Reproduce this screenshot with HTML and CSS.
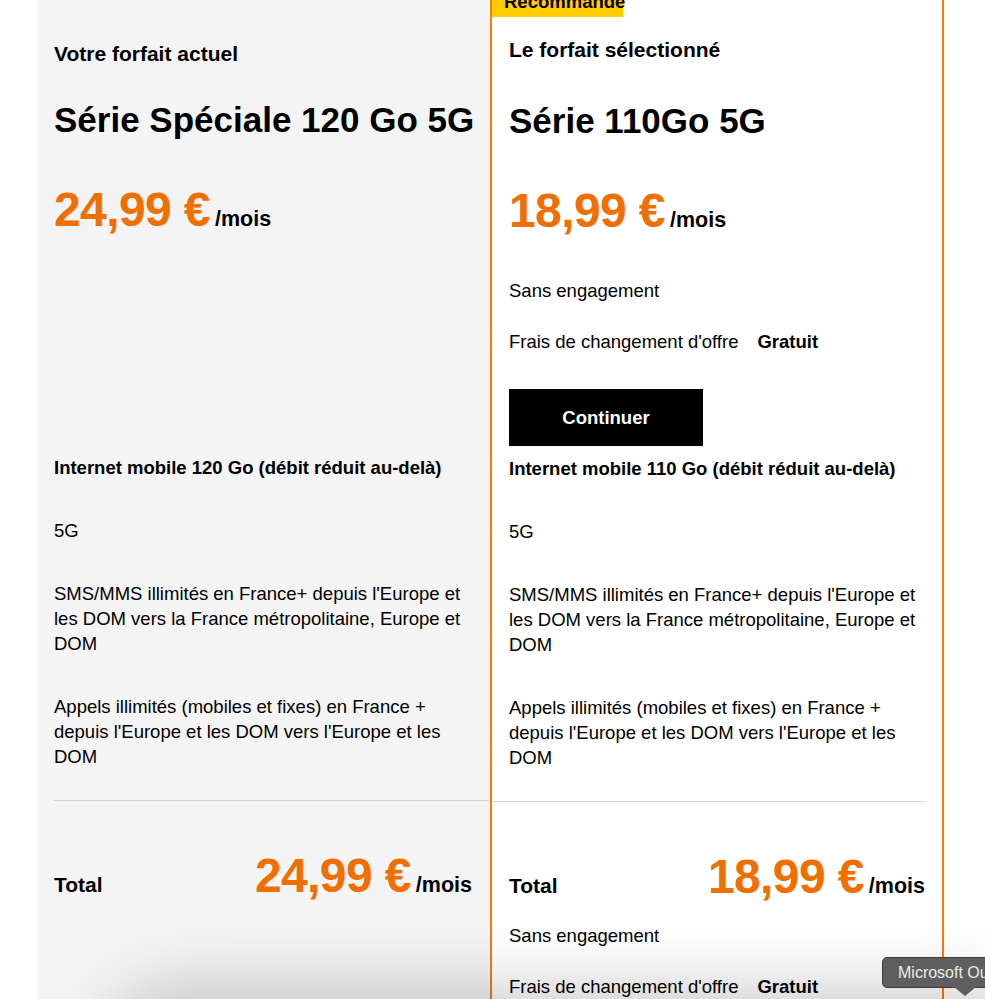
FILE: index.html
```html
<!DOCTYPE html>
<html lang="fr">
<head>
<meta charset="utf-8">
<title>Comparaison des forfaits</title>
<link rel="stylesheet" href="styles.css">
</head>
<body>
<div class="page">
  <section class="plan plan--current">
    <div class="plan-head">
      <p class="plan-label">Votre forfait actuel</p>
      <h2 class="plan-name">Série Spéciale 120 Go 5G</h2>
      <div class="price"><span class="price-amount">24,99 €</span><span class="price-unit">/mois</span></div>
    </div>
    <div class="plan-offer"></div>
    <ul class="features">
      <li class="feature feature--strong">Internet mobile 120 Go (débit réduit au-delà)</li>
      <li class="feature">5G</li>
      <li class="feature">SMS/MMS illimités en France+ depuis l'Europe et les DOM vers la France métropolitaine, Europe et DOM</li>
      <li class="feature">Appels illimités (mobiles et fixes) en France + depuis l'Europe et les DOM vers l'Europe et les DOM</li>
    </ul>
    <div class="total">
      <span class="total-label">Total</span>
      <div class="price"><span class="price-amount">24,99 €</span><span class="price-unit">/mois</span></div>
    </div>
  </section>

  <section class="plan plan--selected">
    <span class="badge">Recommandé</span>
    <div class="plan-head">
      <p class="plan-label">Le forfait sélectionné</p>
      <h2 class="plan-name">Série 110Go 5G</h2>
      <div class="price"><span class="price-amount">18,99 €</span><span class="price-unit">/mois</span></div>
    </div>
    <div class="plan-offer">
      <p class="offer-line">Sans engagement</p>
      <p class="offer-line offer-fee"><span>Frais de changement d'offre</span><strong class="offer-free">Gratuit</strong></p>
      <button class="btn-continue" type="button">Continuer</button>
    </div>
    <ul class="features">
      <li class="feature feature--strong">Internet mobile 110 Go (débit réduit au-delà)</li>
      <li class="feature">5G</li>
      <li class="feature">SMS/MMS illimités en France+ depuis l'Europe et les DOM vers la France métropolitaine, Europe et DOM</li>
      <li class="feature">Appels illimités (mobiles et fixes) en France + depuis l'Europe et les DOM vers l'Europe et les DOM</li>
    </ul>
    <div class="total">
      <span class="total-label">Total</span>
      <div class="price"><span class="price-amount">18,99 €</span><span class="price-unit">/mois</span></div>
    </div>
    <div class="total-notes">
      <p class="offer-line">Sans engagement</p>
      <p class="offer-line offer-fee"><span>Frais de changement d'offre</span><strong class="offer-free">Gratuit</strong></p>
    </div>
  </section>
</div>

<div class="bottom-bar"></div>
<div class="tooltip">Microsoft Outlook</div>
</body>
</html>
```

FILE: styles.css
```css
html, body {
  margin: 0;
  padding: 0;
  background: #ffffff;
  overflow: hidden;
}

body {
  font-family: "Liberation Sans", Arial, Helvetica, sans-serif;
  color: #000000;
  font-size: 18.5px;
  line-height: 25px;
}

.page {
  display: flex;
  align-items: stretch;
  padding-left: 37px;
  min-height: 1100px;
}

.plan {
  position: relative;
  box-sizing: border-box;
  display: flex;
  flex-direction: column;
}

.plan--current {
  width: 453px;
  background: #f4f4f4;
  padding: 0 18px 0 17px;
}

.plan--selected {
  width: 454px;
  background: #ffffff;
  border-left: 2px solid #ff7900;
  border-right: 2px solid #ff7900;
  padding: 0 17px 0 17px;
}

.badge {
  position: absolute;
  left: 0;
  top: -13px;
  height: 30px;
  width: 131px;
  box-sizing: border-box;
  padding-left: 12px;
  background: #ffcc00;
  font-weight: 700;
  font-size: 18.5px;
  line-height: 30px;
  white-space: nowrap;
}

.plan-label {
  margin: 0;
  font-size: 21px;
  line-height: 25px;
  font-weight: 700;
}

.plan--current .plan-label {
  margin: 41px 0 34px;
}

.plan--selected .plan-label {
  margin: 37px 0 39px;
}

.plan-name {
  margin: 0 0 45px;
  font-size: 35px;
  line-height: 40px;
  font-weight: 700;
  white-space: nowrap;
}

.price {
  display: flex;
  align-items: baseline;
  gap: 5px;
  line-height: 50px;
}

.price-amount {
  color: #f16e00;
  font-size: 48px;
  line-height: 50px;
  font-weight: 700;
  letter-spacing: -0.6px;
}

.price-unit {
  font-size: 21.5px;
  line-height: 25px;
  font-weight: 700;
}

.plan-offer {
  height: 211px;
  box-sizing: border-box;
  padding-top: 42px;
}

.offer-line {
  margin: 0;
}

.offer-fee {
  margin-top: 26px;
  display: flex;
  gap: 19px;
}

.offer-free {
  font-weight: 700;
}

.btn-continue {
  display: block;
  margin-top: 35px;
  width: 194px;
  height: 57px;
  border: 0;
  border-radius: 0;
  background: #000000;
  color: #ffffff;
  font-family: inherit;
  font-size: 18.5px;
  font-weight: 700;
  cursor: pointer;
}

.features {
  list-style: none;
  margin: 9px 0 0;
  padding: 0;
  display: flex;
  flex-direction: column;
  gap: 38px;
}

.feature--strong {
  font-weight: 700;
}

.total {
  margin-top: 31px;
  border-top: 1px solid #d2d2d2;
  padding-top: 50px;
  display: flex;
  justify-content: space-between;
  align-items: baseline;
}

.plan--current .total {
  margin-right: -18px;
  padding-right: 18px;
}

.plan--selected .total {
  margin-left: -17px;
  padding-left: 17px;
}

.total-label {
  font-size: 21px;
  font-weight: 700;
}

.total-notes {
  padding-top: 21px;
}

.bottom-bar {
  position: fixed;
  left: 120px;
  right: -40px;
  top: 1010px;
  height: 120px;
  background: #ffffff;
  border-radius: 60px;
  box-shadow: 0 0 70px 20px rgba(0, 0, 0, 0.22);
}

.tooltip {
  position: fixed;
  left: 882px;
  top: 957px;
  height: 31px;
  box-sizing: border-box;
  padding: 0 15px;
  background: #5e5e5e;
  border: 1px solid #3c3c3c;
  border-radius: 5px;
  color: #ececec;
  font-size: 16px;
  line-height: 29px;
  white-space: nowrap;
}

.tooltip::after {
  content: "";
  position: absolute;
  left: 71px;
  top: 29px;
  width: 0;
  height: 0;
  border-left: 11px solid transparent;
  border-right: 11px solid transparent;
  border-top: 9px solid #5e5e5e;
}
```
